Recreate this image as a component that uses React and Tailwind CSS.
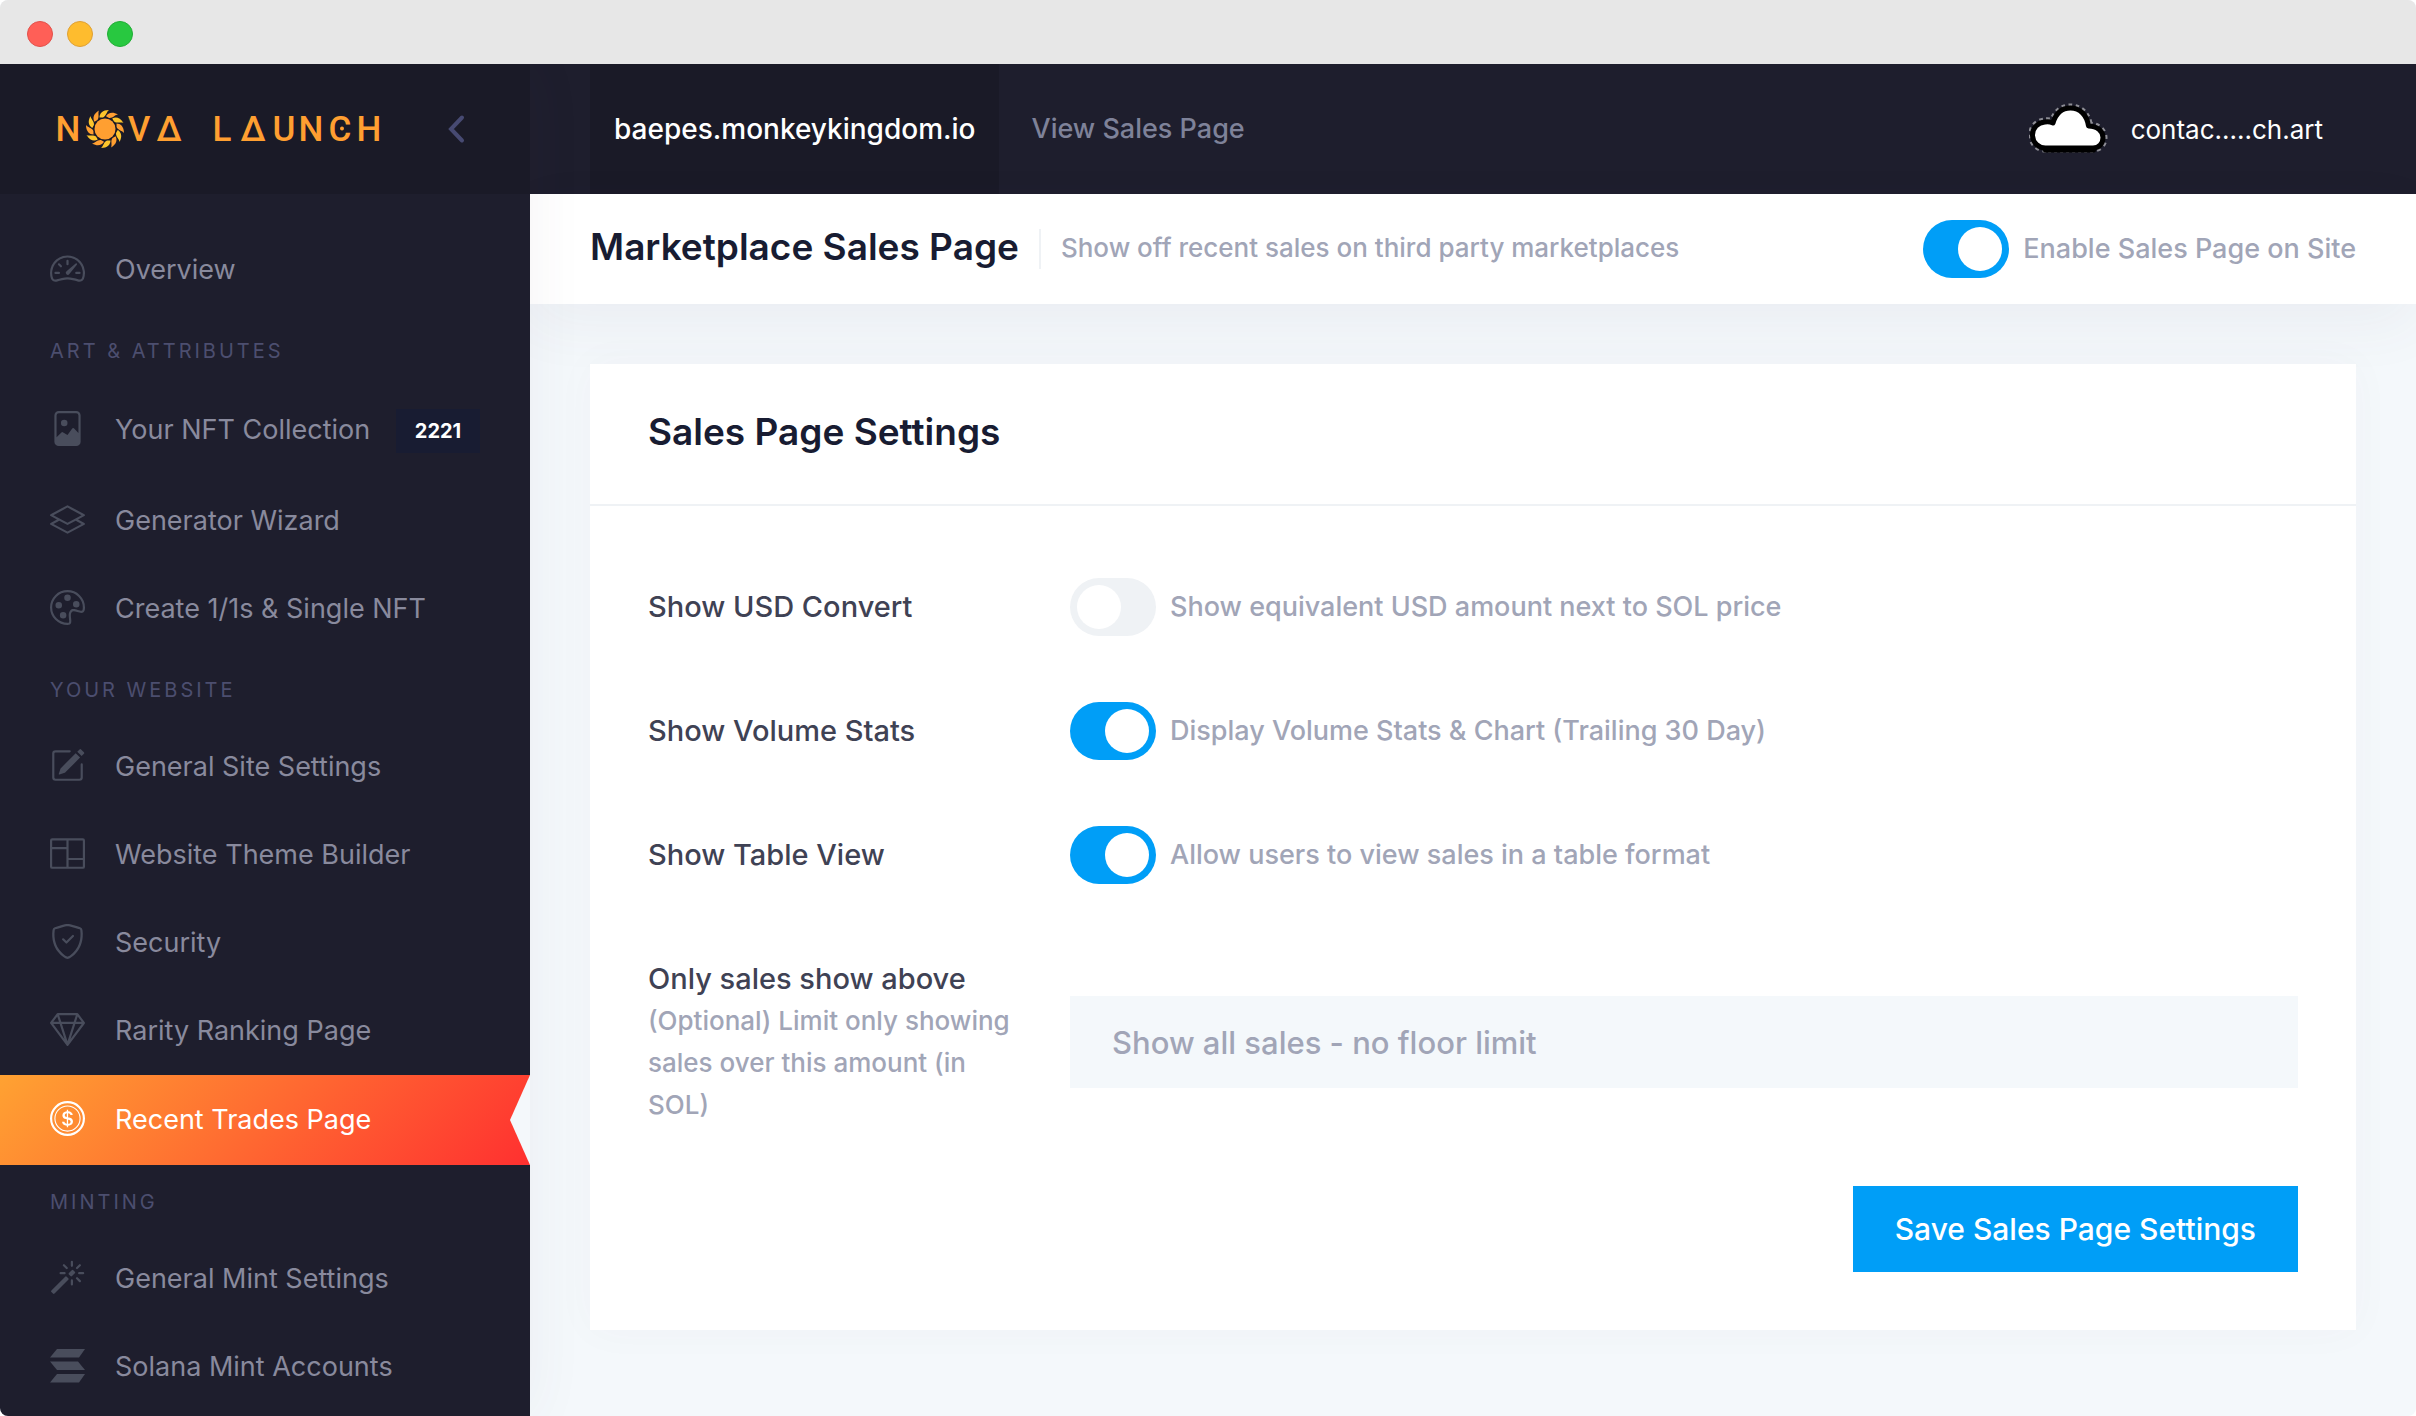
import {
  BsSpeedometer2,
  BsFileImage,
  BsLayers,
  BsPalette,
  BsPencilSquare,
  BsColumns,
  BsShieldCheck,
  BsGem,
  BsCoin,
  BsMagic,
} from "react-icons/bs";

function SolanaIcon({ size }) {
  return (
    <svg width={size} height={size} viewBox="0 0 35 35" fill="currentColor" aria-hidden="true">
      <path d="M7 1h28l-6 8.500H0z" />
      <path d="M0 13.500h28l7 8.500H7z" />
      <path d="M7 26h28l-6 8.500H0z" />
    </svg>
  );
}

const MENU = [
  { items: [{ label: "Overview", Icon: BsSpeedometer2 }] },
  {
    title: "Art & Attributes",
    items: [
      { label: "Your NFT Collection", Icon: BsFileImage, badge: "2221" },
      { label: "Generator Wizard", Icon: BsLayers },
      { label: "Create 1/1s & Single NFT", Icon: BsPalette },
    ],
  },
  {
    title: "Your Website",
    items: [
      { label: "General Site Settings", Icon: BsPencilSquare },
      { label: "Website Theme Builder", Icon: BsColumns },
      { label: "Security", Icon: BsShieldCheck },
      { label: "Rarity Ranking Page", Icon: BsGem },
      { label: "Recent Trades Page", Icon: BsCoin, active: true },
    ],
  },
  {
    title: "Minting",
    items: [
      { label: "General Mint Settings", Icon: BsMagic },
      { label: "Solana Mint Accounts", Icon: SolanaIcon },
    ],
  },
];

const PETALS = Array.from({ length: 12 }, (_, i) => i * 30);

function Logo() {
  return (
    <svg width="336" height="40" viewBox="-6 0 336 40" role="img" aria-label="Nova Launch">
      <g transform="translate(48 20)">
        {PETALS.map((angle, i) => (
          <path
            key={angle}
            transform={`rotate(${angle})`}
            d="M-5.500-11.500C-5.500-15.500-2.500-19 4-19C1.500-17.500 1.500-13-2-11.600Z"
            fill={i % 2 ? "#ff9f31" : "#fcc52c"}
          />
        ))}
        <circle r="10.500" fill="#ff9f31" />
      </g>
      <g fill="#ff9f31" fontFamily="Roboto, sans-serif" fontSize="35" fontWeight="500" textAnchor="middle">
        <text y="32" x="11">N</text>
        <text y="32" x="82">V</text>
        <text y="32" x="112">Δ</text>
        <text y="32" x="165">L</text>
        <text y="32" x="196">Δ</text>
        <text y="32" x="227">U</text>
        <text y="32" x="254">N</text>
        <text y="32" x="283">C</text>
        <text y="32" x="312">H</text>
      </g>
      <circle cx="285" cy="19.500" r="2" fill="#ff9f31" />
    </svg>
  );
}

const CLOUD =
  "M17 46a13 13 0 0 1-1-26 13 13 0 0 1 8 1C27 11 33 6 41.500 6 51 6 58 13 59.500 24 68 24 74 29 74 35.500 74 41.500 70 46 64 46Z";

function CloudAvatar() {
  return (
    <svg width="80" height="54" viewBox="0 0 80 54" aria-hidden="true">
      <path d={CLOUD} fill="none" stroke="#8d8d95" strokeWidth="9" strokeDasharray="3 3" />
      <path d={CLOUD} fill="#fff" stroke="#000" strokeWidth="5" strokeLinejoin="round" />
      <path d="M16 48.500h49" stroke="#000" strokeWidth="4" strokeLinecap="round" />
    </svg>
  );
}

function MenuItem({ label, Icon, badge, active }) {
  return (
    <li>
      <a
        href="#"
        className={
          active
            ? "relative flex h-[90px] items-center gap-[30px] bg-linear-[135deg] from-[#ffa232] to-[#ff3030] px-[50px] text-white"
            : badge
              ? "flex h-[93px] items-center gap-[30px] px-[50px] text-[#898a9d]"
              : "flex h-[88px] items-center gap-[30px] px-[50px] text-[#898a9d]"
        }
      >
        <span className={active ? "mb-1 text-white" : "mb-1 text-[#494d5c]"}>
          <Icon size={35} />
        </span>
        <span className="min-w-0 grow whitespace-nowrap text-[27px]">{label}</span>
        {badge && (
          <span className="flex h-11 w-[84px] shrink-0 items-center justify-center bg-[#181c32] text-[20px] font-bold text-white">
            {badge}
          </span>
        )}
        {active && (
          <span className="absolute inset-y-0 right-0 w-5 bg-[#f4f8fb] [clip-path:polygon(100%_0,0_50%,100%_100%)]" />
        )}
      </a>
    </li>
  );
}

function Sidebar() {
  return (
    <aside className="z-10 w-[530px] shrink-0 bg-[#1e1e2d] shadow-[0_0_56px_rgba(82,63,105,0.06)]">
      <div className="flex h-[130px] items-center justify-between bg-[#1a1a27] pr-[62px] pl-[51px]">
        <a href="#">
          <Logo />
        </a>
        <button type="button" aria-label="Collapse sidebar" className="text-[#474a72]">
          <svg width="24" height="32" viewBox="0 0 24 32" fill="none" stroke="currentColor" strokeWidth="4" aria-hidden="true">
            <path d="M18 4.500 7 16l11 11.500" strokeLinecap="round" />
          </svg>
        </button>
      </div>
      <nav className="pt-8">
        {MENU.map((group, i) => (
          <section key={i}>
            {group.title && (
              <h2 className="flex h-[70px] items-center px-[50px] pt-1 text-[20px] tracking-[3px] text-[#4c4e6f] uppercase">
                {group.title}
              </h2>
            )}
            <ul>
              {group.items.map((item) => (
                <MenuItem key={item.label} {...item} />
              ))}
            </ul>
          </section>
        ))}
      </nav>
    </aside>
  );
}

function Toggle({ id, label, on }) {
  return (
    <div className="flex items-center gap-3.5">
      <input
        id={id}
        type="checkbox"
        role="switch"
        defaultChecked={on}
        className="h-[58px] w-[86px] shrink-0 appearance-none rounded-full bg-[#eff2f5] p-[7px] before:block before:size-11 before:rounded-full before:bg-white checked:bg-[#009ef7] checked:before:translate-x-7"
      />
      <label htmlFor={id} className="text-[27px] font-medium text-[#a1a5b7]">
        {label}
      </label>
    </div>
  );
}

const SETTINGS = [
  { id: "usd", title: "Show USD Convert", label: "Show equivalent USD amount next to SOL price", on: false },
  { id: "volume", title: "Show Volume Stats", label: "Display Volume Stats & Chart (Trailing 30 Day)", on: true },
  { id: "table", title: "Show Table View", label: "Allow users to view sales in a table format", on: true },
];

export default function App() {
  return (
    <div className="flex min-h-screen flex-col overflow-hidden rounded-lg bg-[#f4f8fb] font-['Inter',sans-serif] leading-normal">
      <div className="z-20 flex h-16 items-center gap-3.5 bg-[#e7e7e7] pt-1 pl-[27px]">
        <span className="size-[26px] rounded-full border border-[#e2504a] bg-[#ff5f57]" />
        <span className="size-[26px] rounded-full border border-[#dfa033] bg-[#febc2e]" />
        <span className="size-[26px] rounded-full border border-[#1fae34] bg-[#28c840]" />
      </div>

      <div className="flex grow">
        <Sidebar />

        <div className="flex min-w-0 grow flex-col">
          <header className="flex h-[130px] items-center justify-between bg-[#1e1e2d] pr-[93px] pl-[60px]">
            <nav className="flex h-full items-center">
              <a href="#" className="flex h-full items-center bg-[#1a1a27] px-6 text-[28px] font-medium text-white">
                baepes.monkeykingdom.io
              </a>
              <a href="#" className="flex h-full items-center px-8 text-[27px] font-medium text-[#7e8299]">
                View Sales Page
              </a>
            </nav>
            <button type="button" className="flex items-center gap-[22px] text-[26px] text-white">
              <CloudAvatar />
              contac.....ch.art
            </button>
          </header>

          <div className="flex h-[110px] items-center justify-between bg-white px-[60px] shadow-[0_20px_60px_rgba(82,63,105,0.06)]">
            <div className="flex items-center">
              <h1 className="pb-1 text-[37px] font-semibold text-[#181c32]">Marketplace Sales Page</h1>
              <span className="mx-5 h-10 w-0.5 bg-[#eff2f5]" />
              <p className="pb-1 text-[26px] font-medium text-[#a1a5b7]">Show off recent sales on third party marketplaces</p>
            </div>
            <Toggle id="enable" label="Enable Sales Page on Site" on />
          </div>

          <main className="p-[60px]">
            <form className="bg-white shadow-[0_0_40px_rgba(82,63,105,0.03)]">
              <div className="flex h-[142px] items-center border-b-2 border-[#eff2f5] px-[58px]">
                <h2 className="pb-1 text-[37px] font-semibold text-[#181c32]">Sales Page Settings</h2>
              </div>
              <div className="px-[58px] pt-[72px] pb-[58px]">
                <div className="flex flex-col gap-[66px]">
                  {SETTINGS.map((s) => (
                    <div key={s.id} className="grid grid-cols-[422px_1fr] items-center">
                      <span className="text-[29px] font-medium text-[#3f4254]">{s.title}</span>
                      <Toggle id={s.id} label={s.label} on={s.on} />
                    </div>
                  ))}
                </div>
                <div className="mt-[74px] grid grid-cols-[422px_1fr] items-center">
                  <label htmlFor="floor" className="pr-12">
                    <span className="block text-[29px] leading-[42px] font-medium text-[#3f4254]">
                      Only sales show above
                    </span>
                    <span className="block text-[26px] leading-[42px] font-medium text-[#a1a5b7]">
                      (Optional) Limit only showing sales over this amount (in SOL)
                    </span>
                  </label>
                  <input
                    id="floor"
                    type="text"
                    placeholder="Show all sales - no floor limit"
                    className="h-[92px] w-full bg-[#f4f8fb] px-[42px] text-[31px] font-medium placeholder:text-[#a1a5b7]"
                  />
                </div>
                <div className="mt-[60px] flex justify-end">
                  <button type="submit" className="h-[86px] bg-[#009ef7] px-[42px] text-[30px] font-medium text-white">
                    Save Sales Page Settings
                  </button>
                </div>
              </div>
            </form>
          </main>
        </div>
      </div>
    </div>
  );
}
